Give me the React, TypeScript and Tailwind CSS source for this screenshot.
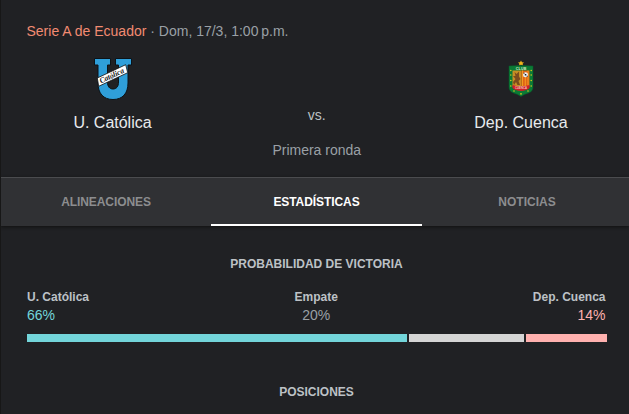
import React from "react";

function CatolicaCrest() {
  return (
    <svg width="40" height="44" viewBox="0 0 40 44" className="block">
      <path
        d="M1.500 1.500H17.500V8H14.500V25C14.500 29.500 16.500 32 20 32S25.500 29.500 25.500 25V8H22.500V1.500H38.500V8H35V26C35 36.500 29.500 42.500 20 42.500S5 36.500 5 26V8H1.500Z"
        fill="#2f9fda"
        stroke="#0c1318"
        strokeWidth="1"
      />
      <path d="M4.300 21L32.700 7.700L34.700 15.700L5.700 29.300Z" fill="#fff" stroke="#111" strokeWidth="0.8" />
      <text
        x="8"
        y="26.500"
        transform="rotate(-25 8 26.500)"
        fontSize="8"
        textLength="26"
        lengthAdjust="spacingAndGlyphs"
        fill="#111"
        className="font-['Liberation_Serif',serif] font-bold italic"
      >
        Católica
      </text>
    </svg>
  );
}

const studs = [10.5, 15, 20.5, 26, 31];

function CuencaCrest() {
  return (
    <svg width="26" height="38" viewBox="0 0 26 38" className="block">
      <path d="M13 0.500L14 2.300L16 2.500L14.600 3.800L15 5.500L13 4.700L11 5.500L11.400 3.800L10 2.500L12 2.300Z" fill="#f0b51c" />
      <path d="M1 6Q13 4.800 25 6V27Q25 31.500 20.500 33Q16 34.200 13 36.500Q10 34.200 5.500 33Q1 31.500 1 27Z" fill="#0b7a35" stroke="#075c2a" strokeWidth="0.500" />
      <text x="13" y="9.500" textAnchor="middle" fontSize="3.600" textLength="10.500" fill="#d5ecc8" className="font-['Liberation_Sans',sans-serif] font-bold">
        CLUB
      </text>
      <rect x="4.500" y="10.500" width="8.700" height="16" fill="#c98f24" />
      <rect x="13.200" y="10.500" width="8.300" height="16" fill="#df6416" />
      <path d="M14.500 10.500V26M17.300 17V26M20 10.500V26" stroke="#f39a22" strokeWidth="1" />
      <path d="M6.500 12L8.500 14L11 11.500V16.500L12.500 19L10.500 21L12 25H9.500L8 22L6 25L5 22L7.500 19L5 16L7.500 16Z" fill="#7d4b1d" />
      <circle cx="17.500" cy="14.700" r="2.500" fill="#eee" />
      <path d="M16.800 14h1.500v1.500h-1.500zM15.500 12.700h1v1h-1zM18.700 15.700h1v1h-1z" fill="#222" />
      <path d="M4.500 25Q13 27.500 21.500 25V28Q19 30.500 13 31Q7 30.500 4.500 28Z" fill="#cf2028" />
      <text x="13" y="29" textAnchor="middle" fontSize="2.800" textLength="12" fill="#f3c4bc" className="font-['Liberation_Sans',sans-serif] font-bold">
        CUENCA
      </text>
      {studs.map((y) => (
        <g key={y} fill="#d5c51d">
          <circle cx={y > 30 ? 6 : 2.8} cy={y} r="0.800" />
          <circle cx={y > 30 ? 20 : 23.2} cy={y} r="0.800" />
        </g>
      ))}
      <circle cx="13" cy="33.800" r="0.900" fill="#d5c51d" />
    </svg>
  );
}

function Team({ name, children }: { name: string; children: React.ReactNode }) {
  return (
    <div className="flex w-[170px] flex-col items-center">
      <div className="flex h-[46px] items-center justify-center">{children}</div>
      <div className="mt-[11px] text-base leading-5 text-[#e8eaed]">{name}</div>
    </div>
  );
}

const outcomes = [
  { name: "U. Católica", pct: "66%", align: "text-left", color: "text-[#73d5da]" },
  { name: "Empate", pct: "20%", align: "text-center", color: "text-[#9aa0a6]" },
  { name: "Dep. Cuenca", pct: "14%", align: "text-right", color: "text-[#ffb1af]" },
];

export default function App() {
  return (
    <div className="h-[414px] w-[629px] overflow-hidden border-l border-[#171717] bg-[#202124] font-['Liberation_Sans',Arial,sans-serif] text-sm text-[#9aa0a6]">
      <header className="h-[177px] pt-[21px]">
        <div className="pl-[25.500px] leading-5 whitespace-pre">
          <span className="text-[#f28b72]">Serie A de Ecuador</span> · Dom, 17/3, 1:00{"\u202f"}p.m.
        </div>
        <div className="flex justify-between pt-[15px] pr-[23px] pl-[26.500px]">
          <Team name="U. Católica"><CatolicaCrest /></Team>
          <div className="flex flex-col items-center pt-[49px]">
            <div className="leading-5 text-[#bdc1c6]">vs.</div>
            <div className="mt-[15px] leading-5">Primera ronda</div>
          </div>
          <Team name="Dep. Cuenca"><CuencaCrest /></Team>
        </div>
      </header>

      <nav className="flex h-[49px] border-t border-[#4b4c4f] bg-[#303134] text-xs font-bold text-[#8c8d8f] shadow-[0_1px_3px_#111]">
        <div className="flex w-[210px] shrink-0 items-center justify-center tracking-[-0.08px]">ALINEACIONES</div>
        <div className="flex w-[211px] shrink-0 items-center justify-center border-b-2 border-white pt-0.5 tracking-[-0.08px] text-white">ESTADÍSTICAS</div>
        <div className="flex w-[210px] shrink-0 items-center justify-center">NOTICIAS</div>
      </nav>

      <main className="pt-7 pr-[22px] pl-[26px]">
        <h2 className="pr-px text-center text-xs leading-5 font-bold text-[#bdc1c6]">PROBABILIDAD DE VICTORIA</h2>
        <div className="grid grid-cols-3 pt-[13px] pr-[1.500px]">
          {outcomes.map((o) => (
            <div key={o.name} className={o.align}>
              <div className="text-xs leading-5 font-bold text-[#bdc1c6]">{o.name}</div>
              <div className={"leading-4 " + o.color}>{o.pct}</div>
            </div>
          ))}
        </div>
        <div className="mt-[11px] flex h-2 gap-0.5">
          <div className="w-[380px] shrink-0 bg-[#73d5da]" />
          <div className="w-[115px] shrink-0 bg-[#d5d5d5]" />
          <div className="w-[81px] shrink-0 bg-[#ffb1af]" />
        </div>
        <h2 className="mt-10 pr-px text-center text-xs leading-5 font-bold text-[#bdc1c6]">POSICIONES</h2>
      </main>
    </div>
  );
}
